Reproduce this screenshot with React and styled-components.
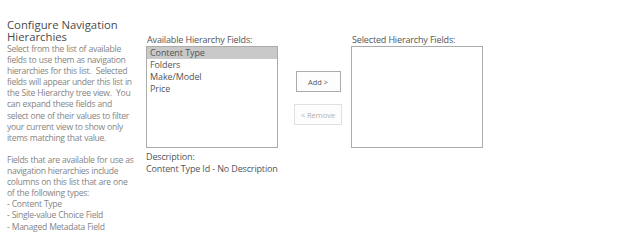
import styled, { createGlobalStyle } from "styled-components";

const GlobalStyle = createGlobalStyle`
  body {
    margin: 0;
    background: #fff;
    font-family: "Open Sans", "Noto Sans", sans-serif;
  }
`

const availableFields = ["Content Type", "Folders", "Make/Model", "Price"]

const descriptionLines = [
    "Select from the list of available",
    "fields to use them as navigation",
    "hierarchies for this list.  Selected",
    "fields will appear under this list in",
    "the Site Hierarchy tree view.  You",
    "can expand these fields and",
    "select one of their values to filter",
    "your current view to show only",
    "items matching that value.",
    "",
    "Fields that are available for use as",
    "navigation hierarchies include",
    "columns on this list that are one",
    "of the following types:",
    "- Content Type",
    "- Single-value Choice Field",
    "- Managed Metadata Field",
]

const App = () => {
    return (
        <>
            <GlobalStyle/>
            <Page>
                <Sidebar>
                    <Heading>Configure Navigation</Heading>
                    <Heading>Hierarchies</Heading>
                    <Description>
                        {descriptionLines.map((line, i) =>
                            <Line key={i}>{line || "\u00a0"}</Line>
                        )}
                    </Description>
                </Sidebar>

                <Column>
                    <Label>Available Hierarchy Fields:</Label>
                    <ListBox>
                        {availableFields.map((field, i) =>
                            <Option key={field} selected={i === 0}>{field}</Option>
                        )}
                    </ListBox>
                    <Note>
                        Description:<br/>
                        Content Type Id - No Description
                    </Note>
                </Column>

                <Actions>
                    <Button>Add &gt;</Button>
                    <Button disabled>&lt; Remove</Button>
                </Actions>

                <Column>
                    <Label>Selected Hierarchy Fields:</Label>
                    <ListBox/>
                </Column>
            </Page>
        </>
    )
}

const Page = styled.div`
  display: flex;
  align-items: flex-start;
  padding: 19px 0 0 7px;
  width: 624px;
  height: 245px;
  box-sizing: border-box;
`

const Sidebar = styled.div`
  width: 139px;
  flex-shrink: 0;
`

const Heading = styled.div`
  font-size: 11.3px;
  line-height: 12px;
  color: #4a4a4a;
`

const Description = styled.div`
  margin-top: 1px;
  font-size: 8.6px;
  line-height: 11.1px;
  letter-spacing: -0.3px;
  word-spacing: 0.3px;
  color: #858585;
  white-space: pre;
`

const Line = styled.div``

const Column = styled.div`
  display: flex;
  flex-direction: column;
  width: 132px;
  padding-top: 14px;
`

const Label = styled.div`
  font-size: 9px;
  line-height: 13px;
  letter-spacing: -0.15px;
  color: #555;
  margin-left: 1px;
  white-space: nowrap;
`

const ListBox = styled.div`
  height: 102px;
  border: 1px solid #ababab;
  box-sizing: border-box;
  background: #fff;
`

const Option = styled.div`
  font-size: 9px;
  line-height: 12px;
  letter-spacing: -0.1px;
  color: #555;
  padding-left: 3px;
  background: ${props => props.selected ? "#c9c9c9" : "transparent"};
`

const Note = styled.div`
  margin-top: 3px;
  font-size: 9px;
  line-height: 12px;
  letter-spacing: -0.15px;
  color: #555;
  white-space: nowrap;
`

const Actions = styled.div`
  display: flex;
  flex-direction: column;
  align-items: center;
  gap: 12px;
  width: 52px;
  margin: 52px 7px 0 14px;
`

const Button = styled.button`
  font-family: inherit;
  font-size: 7.5px;
  height: 21px;
  padding: 0 6px;
  min-width: 45px;
  white-space: nowrap;
  background: #fdfdfd;
  border: 1px solid ${props => props.disabled ? "#e1e1e1" : "#ababab"};
  color: ${props => props.disabled ? "#b1b1b1" : "#555"};
`

export default App
